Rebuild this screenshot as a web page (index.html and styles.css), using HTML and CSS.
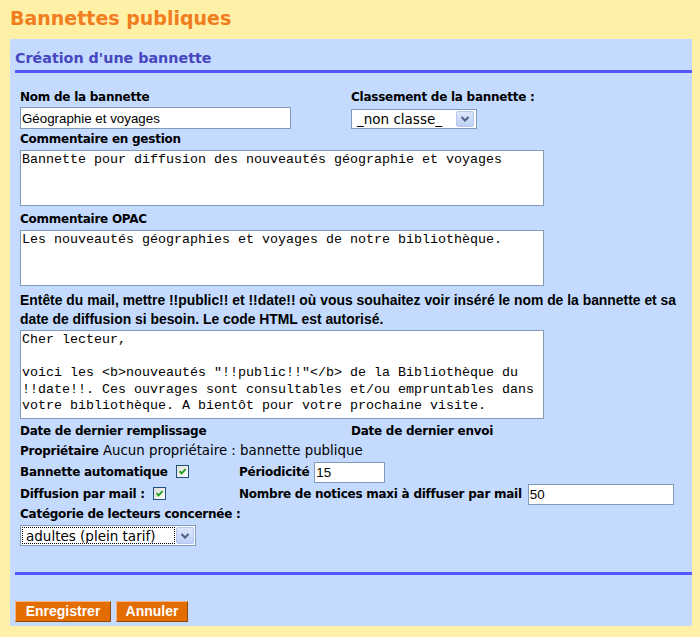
FILE: index.html
```html
<!DOCTYPE html>
<html lang="fr">
<head>
<meta charset="utf-8">
<title>Bannettes publiques</title>
<link rel="stylesheet" href="styles.css">
</head>
<body>
<h1 class="page-title">Bannettes publiques</h1>
<div class="panel">
  <h2 class="panel-title">Création d'une bannette</h2>
  <div class="form">
    <div class="row-two">
      <div>
        <div class="lbl">Nom de la bannette</div>
        <input class="txt txt-nom" type="text" value="Géographie et voyages">
      </div>
      <div>
        <div class="lbl">Classement de la bannette :</div>
        <div class="sel sel-class">
          <span class="sel-text">_non classe_</span>
          <span class="sel-arrow"><svg width="16" height="14" viewBox="0 0 16 14"><polyline points="4.5,5 8,8.5 11.5,5" fill="none" stroke="#4D6185" stroke-width="2"/></svg></span>
        </div>
      </div>
    </div>

    <div class="lbl lbl-gap">Commentaire en gestion</div>
    <textarea class="area area-short">Bannette pour diffusion des nouveautés géographie et voyages</textarea>

    <div class="lbl lbl-gap5">Commentaire OPAC</div>
    <textarea class="area area-short">Les nouveautés géographies et voyages de notre bibliothèque.</textarea>

    <p class="help">Entête du mail, mettre !!public!! et !!date!! où vous souhaitez voir inséré le nom de la bannette et sa<br>date de diffusion si besoin. Le code HTML est autorisé.</p>
    <textarea class="area area-tall">Cher lecteur,

voici les &lt;b&gt;nouveautés "!!public!!"&lt;/b&gt; de la Bibliothèque du
!!date!!. Ces ouvrages sont consultables et/ou empruntables dans
votre bibliothèque. A bientôt pour votre prochaine visite.</textarea>

    <div class="row-two row-dates">
      <div class="lbl">Date de dernier remplissage</div>
      <div class="lbl">Date de dernier envoi</div>
    </div>

    <div class="owner"><span class="lbl-in">Propriétaire</span> Aucun propriétaire : bannette publique</div>

    <div class="opt-row opt-first">
      <div class="cell"><span class="lbl-in">Bannette automatique</span><span class="chk"><svg width="11" height="11" viewBox="0 0 11 11"><polyline points="2.5,5.2 4.6,7.4 8.6,3.2" fill="none" stroke="#21A121" stroke-width="1.9"/></svg></span></div>
      <div class="cell gap5"><span class="lbl-in">Périodicité</span><input class="txt txt-per" type="text" value="15"></div>
    </div>
    <div class="opt-row">
      <div class="cell"><span class="lbl-in">Diffusion par mail :</span><span class="chk"><svg width="11" height="11" viewBox="0 0 11 11"><polyline points="2.5,5.2 4.6,7.4 8.6,3.2" fill="none" stroke="#21A121" stroke-width="1.9"/></svg></span></div>
      <div class="cell gap6"><span class="lbl-in">Nombre de notices maxi à diffuser par mail</span><input class="txt txt-nb" type="text" value="50"></div>
    </div>

    <div class="lbl lbl-cat">Catégorie de lecteurs concernée :</div>
    <div class="sel sel-cat">
      <span class="sel-text focus">adultes (plein tarif)</span>
      <span class="sel-arrow"><svg width="16" height="14" viewBox="0 0 16 14"><polyline points="4.5,5 8,8.5 11.5,5" fill="none" stroke="#4D6185" stroke-width="2"/></svg></span>
    </div>
  </div>
  <hr class="sep">
  <div class="buttons">
    <button class="btn btn-save" type="button">Enregistrer</button>
    <button class="btn btn-cancel" type="button">Annuler</button>
  </div>
</div>
</body>
</html>
```

FILE: styles.css
```css
html, body {
  margin: 0;
  padding: 0;
}
body {
  background: #FFF0A8;
  font-family: "DejaVu Sans", Verdana, sans-serif;
  color: #000;
  width: 700px;
}
.page-title {
  margin: 0;
  height: 39px;
  line-height: 37px;
  padding-left: 10px;
  font-size: 19px;
  font-weight: bold;
  color: #F07D1E;
}
.panel {
  margin-left: 10px;
  width: 682px;
  box-sizing: border-box;
  background: #C4DBFF;
  padding: 0 0 4px 5px;
}
.panel-title {
  margin: 0;
  padding: 9px 0 2px;
  line-height: 20px;
  font-size: 14.3px;
  font-weight: bold;
  color: #4646C0;
  border-bottom: 3px solid #5555FF;
}
.form {
  padding: 16px 0 0 5px;
}
.lbl, .lbl-in {
  font-size: 12px;
  font-weight: bold;
  letter-spacing: -0.25px;
  line-height: 17px;
}
.row-two {
  display: grid;
  grid-template-columns: 331px 1fr;
}
.lbl-gap { margin-top: 2px; }
.lbl-gap5 { margin-top: 5px; }
.txt {
  display: block;
  box-sizing: border-box;
  height: 22px;
  margin: 1px 0 0;
  padding: 0 1px;
  border: 1px solid #7F9DB9;
  background: #fff;
  font-family: "Liberation Sans", Arial, sans-serif;
  font-size: 13.33px;
  color: #000;
  outline: none;
}
.txt-nom { width: 271px; }
.txt-per { width: 71px; height: 21px; margin: 0; }
.txt-nb { width: 146px; height: 21px; margin: 0; }
.area {
  display: block;
  box-sizing: border-box;
  width: 524px;
  margin: 2px 0 0;
  padding: 1px;
  border: 1px solid #7F9DB9;
  background: #fff;
  font-family: "Liberation Mono", "Courier New", monospace;
  font-size: 13.33px;
  line-height: 16.5px;
  color: #000;
  resize: none;
  overflow: hidden;
  outline: none;
}
.area-short { height: 56px; }
.area-tall { height: 89px; margin-top: 1px; }
.help {
  margin: 5px 0 0;
  font-family: "Liberation Sans", Tahoma, sans-serif;
  font-size: 13.9px;
  font-weight: bold;
  line-height: 19px;
  white-space: nowrap;
}
.row-dates { margin-top: 4px; }
.owner {
  font-size: 13.33px;
  line-height: 19px;
  height: 19px;
  margin-top: 1px;
}
.opt-row {
  display: grid;
  grid-template-columns: 219px 1fr;
  height: 22px;
}
.opt-first { margin-top: 1px; }
.cell {
  display: flex;
  align-items: center;
}
.gap5 { gap: 5px; }
.gap6 { gap: 6px; }
.chk {
  display: inline-flex;
  align-items: center;
  justify-content: center;
  box-sizing: border-box;
  width: 13px;
  height: 13px;
  margin-left: 8px;
  margin-top: -2px;
  border: 1px solid #1C5180;
  background: linear-gradient(135deg, #DCDCD7, #FFFFFF);
}
.lbl-cat { margin-top: 1px; }
.sel {
  display: flex;
  box-sizing: border-box;
  border: 1px solid #7F9DB9;
  background: #fff;
  padding: 1px;
  align-items: stretch;
}
.sel-class {
  width: 126px;
  height: 20px;
  margin-top: 3px;
  padding-right: 2px;
}
.sel-cat {
  width: 176px;
  height: 21px;
  margin-top: 2px;
}
.sel-text {
  flex: 1;
  display: flex;
  align-items: center;
  padding-left: 4px;
  font-size: 13.5px;
  white-space: nowrap;
  overflow: hidden;
}
.sel-text.focus {
  border: 1px dotted #000;
  padding-left: 3px;
  margin-right: 1px;
}
.sel-arrow {
  display: flex;
  align-items: center;
  justify-content: center;
  box-sizing: border-box;
  width: 18px;
  border: 1px solid #B7C8F0;
  border-radius: 2px;
  background: linear-gradient(#DDE7FD, #BFD0F6);
}
.sep {
  border: 0;
  height: 3px;
  margin: 26px 0 0;
  background: #5555FF;
}
.buttons {
  display: flex;
  gap: 5px;
  margin-top: 26px;
}
.btn {
  box-sizing: border-box;
  height: 21px;
  padding: 0;
  border: 1px solid;
  border-color: #F4B183 #8C4A10 #8C4A10 #F4B183;
  background: #E36D00;
  color: #fff;
  font-family: "Liberation Sans", Arial, sans-serif;
  font-size: 14px;
  font-weight: bold;
  line-height: 19px;
  cursor: pointer;
}
.btn-save { width: 96px; }
.btn-cancel { width: 72px; }
```
